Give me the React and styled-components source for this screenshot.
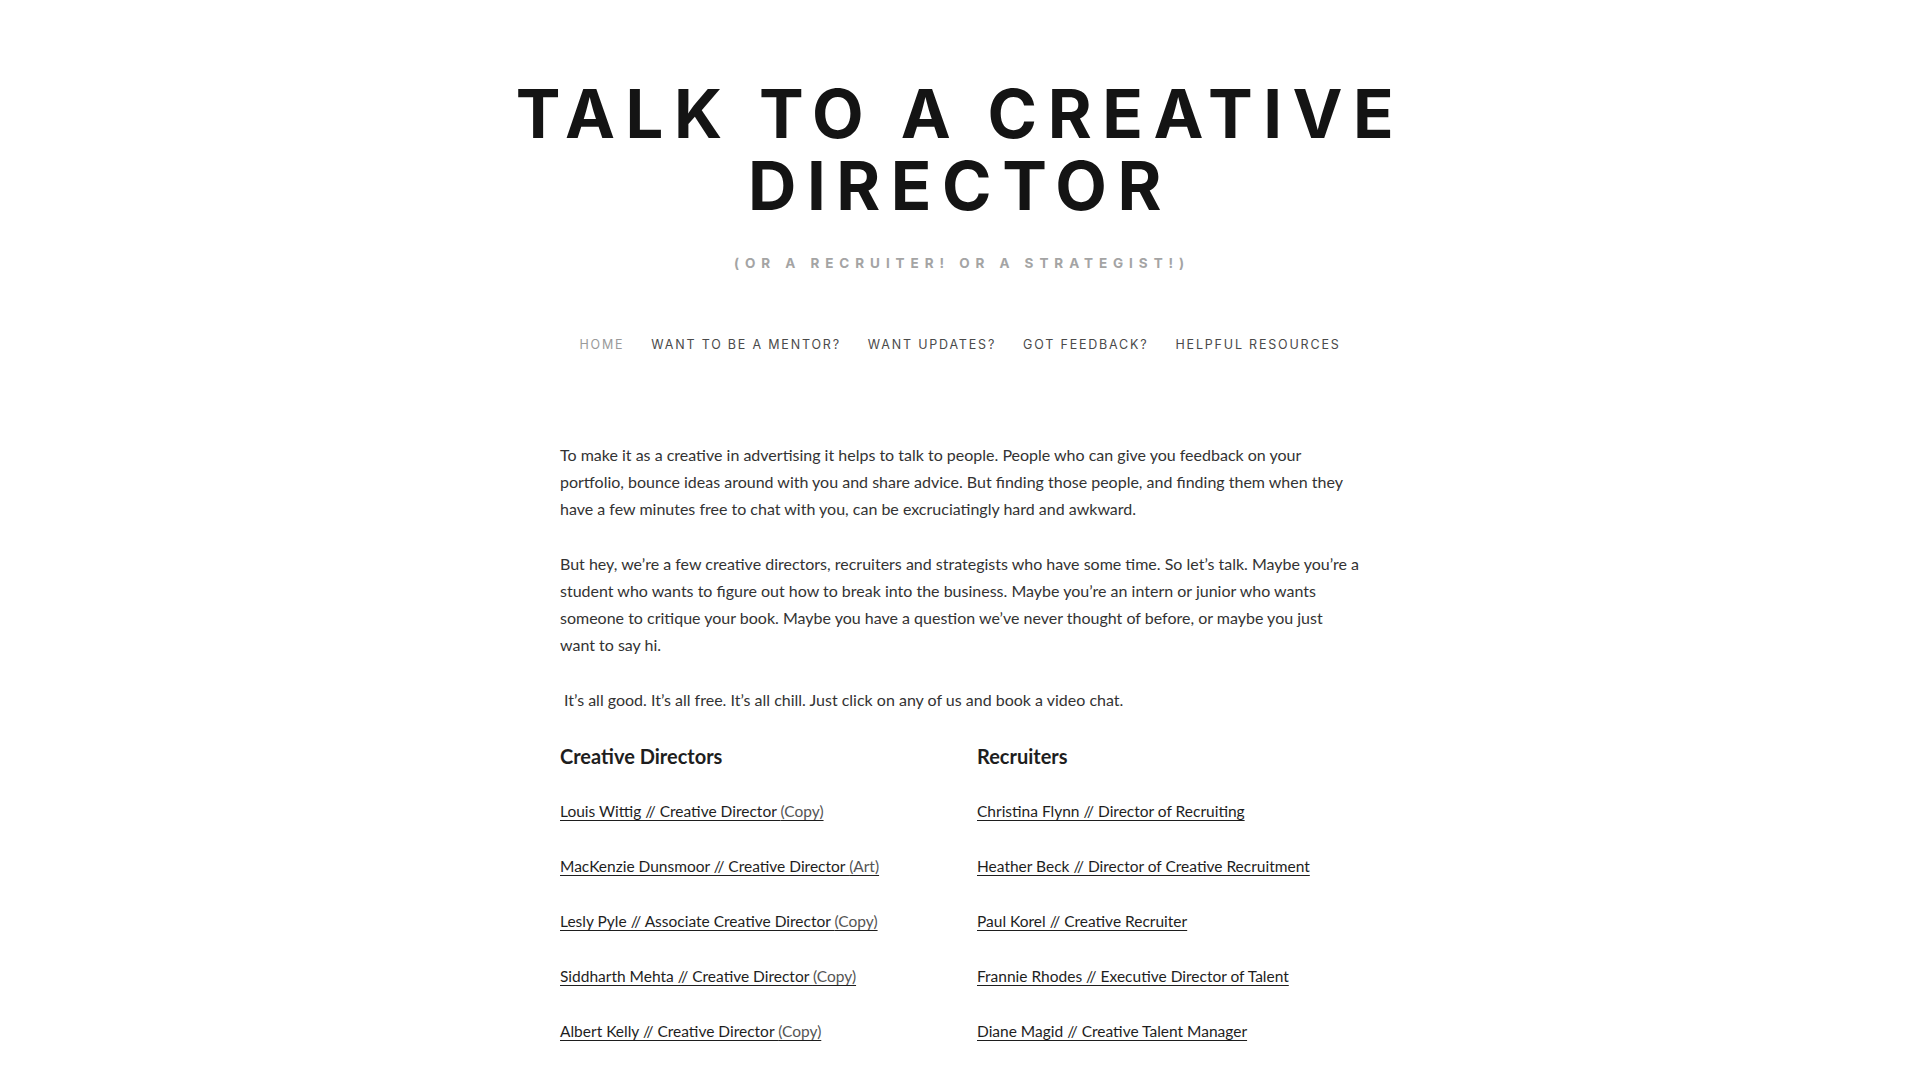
import React from 'react';
import styled, { createGlobalStyle } from 'styled-components';

const GlobalStyle = createGlobalStyle`
  html, body {
    margin: 0;
    padding: 0;
    background: #fff;
  }
  body {
    font-family: "Lato", "Liberation Sans", sans-serif;
    color: #333;
    -webkit-font-smoothing: antialiased;
  }
`;

const Page = styled.div`
  display: flex;
  flex-direction: column;
  align-items: center;
  padding-top: 78px;
`;

const Header = styled.header`
  display: flex;
  flex-direction: column;
  align-items: center;
  text-align: center;
`;

const SiteTitle = styled.h1`
  margin: 0;
  font-family: "Inter", "Liberation Sans", sans-serif;
  font-weight: 700;
  font-size: 67px;
  line-height: 72px;
  letter-spacing: 0.157em;
  color: #141414;
`;

const Tagline = styled.p`
  margin: 33px 0 0;
  font-family: "Inter", "Liberation Sans", sans-serif;
  font-weight: 700;
  font-size: 13.5px;
  letter-spacing: 0.44em;
  padding-left: 0.3em;
  color: #a4a4a4;
`;

const Nav = styled.nav`
  display: flex;
  gap: 27px;
  margin-top: 66px;
`;

const NavLink = styled.a`
  font-family: "Inter", "Liberation Sans", sans-serif;
  font-size: 12.5px;
  letter-spacing: 0.145em;
  text-transform: uppercase;
  text-decoration: none;
  color: ${(props) => (props.$active ? '#9a9a9a' : '#4a4a4a')};
`;

const Content = styled.main`
  width: 800px;
  margin-top: 89px;
  font-size: 16px;
  line-height: 27px;
  color: #333;
`;

const Para = styled.p`
  margin: 0 0 28px;
`;

const Columns = styled.div`
  display: grid;
  grid-template-columns: 417px 1fr;
  padding-top: 2px;
`;

const Column = styled.div`
  display: flex;
  flex-direction: column;
  gap: 28px;
`;

const ColumnTitle = styled.h3`
  margin: 0;
  font-size: 20px;
  font-weight: 700;
  line-height: 27px;
  color: #1e1e1e;
`;

const PersonItem = styled.div`
  display: flex;
  height: 27px;
  align-items: center;
`;

const PersonLink = styled.a`
  color: #1e1e1e;
  font-size: 15.5px;
  line-height: 27px;
  text-decoration: underline;
  text-underline-offset: 3px;
  text-decoration-thickness: 1px;
`;

const Discipline = styled.span`
  color: #555;
`;

const navItems = [
  'Home',
  'Want to be a mentor?',
  'Want updates?',
  'Got feedback?',
  'Helpful resources',
];

const directors = [
  ['Louis Wittig // Creative Director ', '(Copy)'],
  ['MacKenzie Dunsmoor // Creative Director ', '(Art)'],
  ['Lesly Pyle // Associate Creative Director ', '(Copy)'],
  ['Siddharth Mehta // Creative Director ', '(Copy)'],
  ['Albert Kelly // Creative Director ', '(Copy)'],
];

const recruiters = [
  'Christina Flynn // Director of Recruiting',
  'Heather Beck // Director of Creative Recruitment',
  'Paul Korel // Creative Recruiter',
  'Frannie Rhodes // Executive Director of Talent',
  'Diane Magid // Creative Talent Manager',
];

export default function App() {
  return (
    <>
      <GlobalStyle />
      <Page>
        <Header>
          <SiteTitle>
            TALK TO A CREATIVE
            <br />
            DIRECTOR
          </SiteTitle>
          <Tagline>(OR A RECRUITER! OR A STRATEGIST!)</Tagline>
          <Nav>
            {navItems.map((item, i) => (
              <NavLink key={item} href="#" $active={i === 0}>
                {item}
              </NavLink>
            ))}
          </Nav>
        </Header>

        <Content>
          <Para>
            To make it as a creative in advertising it helps to talk to people. People who can give
            you feedback on your portfolio, bounce ideas around with you and share advice. But
            finding those people, and finding them when they have a few minutes free to chat with
            you, can be excruciatingly hard and awkward.
          </Para>
          <Para>
            But hey, we’re a few creative directors, recruiters and strategists who have some time.
            So let’s talk. Maybe you’re a student who wants to figure out how to break into the
            business. Maybe you’re an intern or junior who wants someone to critique your book.
            Maybe you have a question we’ve never thought of before, or maybe you just want to say
            hi.
          </Para>
          <Para>
            &nbsp;It’s all good. It’s all free. It’s all chill. Just click on any of us and book a
            video chat.
          </Para>

          <Columns>
            <Column>
              <ColumnTitle>Creative Directors</ColumnTitle>
              {directors.map(([name, kind]) => (
                <PersonItem key={name}>
                  <PersonLink href="#">
                    {name}
                    <Discipline>{kind}</Discipline>
                  </PersonLink>
                </PersonItem>
              ))}
            </Column>
            <Column>
              <ColumnTitle>Recruiters</ColumnTitle>
              {recruiters.map((name) => (
                <PersonItem key={name}>
                  <PersonLink href="#">{name}</PersonLink>
                </PersonItem>
              ))}
            </Column>
          </Columns>
        </Content>
      </Page>
    </>
  );
}
